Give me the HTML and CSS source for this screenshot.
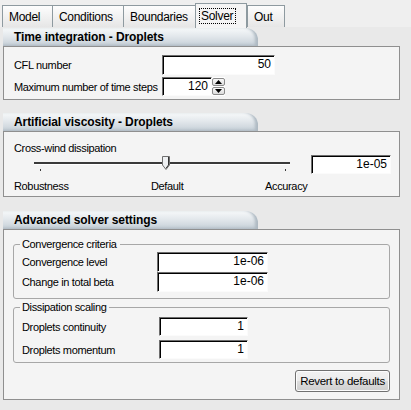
FILE: index.html
```html
<!DOCTYPE html>
<html>
<head>
<meta charset="utf-8">
<link rel="stylesheet" href="styles.css">
</head>
<body>
<div class="win">
  <div class="tabs">
    <div class="tab">Model</div>
    <div class="tab">Conditions</div>
    <div class="tab">Boundaries</div>
    <div class="tab sel"><span class="focus">Solver</span></div>
    <div class="tab">Out</div>
  </div>
  <div class="page">
    <div class="section">
      <div class="head">Time integration - Droplets</div>
      <div class="box box1">
        <div class="row r1"><span class="lbl w148">CFL number</span><div class="field f113">50</div></div>
        <div class="row r2"><span class="lbl w148">Maximum number of time steps</span>
          <div class="spin"><div class="field f50">120</div>
            <div class="btns">
              <div class="sb"><svg width="7" height="4" viewBox="0 0 7 4"><path d="M0 4 L3.5 0 L7 4Z" fill="#000"/></svg></div>
              <div class="sb"><svg width="7" height="4" viewBox="0 0 7 4"><path d="M0 0 L3.5 4 L7 0Z" fill="#000"/></svg></div>
            </div>
          </div>
        </div>
      </div>
    </div>
    <div class="section">
      <div class="head">Artificial viscosity - Droplets</div>
      <div class="box box2">
        <div class="lbl cw">Cross-wind dissipation</div>
        <div class="slrow">
          <div class="slider">
            <div class="track"></div>
            <div class="tick t0"></div>
            <div class="tick t2"></div>
            <svg class="thumb" width="8" height="15" viewBox="0 0 8 15"><path d="M0.5 0.5 H7.5 V9 L4 13.5 L0.5 9 Z" fill="#eef0f2" stroke="#6f6f6f"/><path d="M6.5 1 V9 L4 12.3" fill="none" stroke="#333"/></svg>
          </div>
          <div class="field f80">1e-05</div>
        </div>
        <div class="sllabels"><span class="lbl rob">Robustness</span><span class="lbl def">Default</span><span class="lbl acc">Accuracy</span></div>
      </div>
    </div>
    <div class="section">
      <div class="head">Advanced solver settings</div>
      <div class="box box3">
        <div class="group g1">
          <span class="gtitle">Convergence criteria</span>
          <div class="row gr1"><span class="lbl w135">Convergence level</span><div class="field f111">1e-06</div></div>
          <div class="row gr2"><span class="lbl w135">Change in total beta</span><div class="field f111">1e-06</div></div>
        </div>
        <div class="group g2">
          <span class="gtitle">Dissipation scaling</span>
          <div class="row gr3"><span class="lbl w137">Droplets continuity</span><div class="field f89">1</div></div>
          <div class="row gr4"><span class="lbl w137">Droplets momentum</span><div class="field f89">1</div></div>
        </div>
        <div class="btnrow"><div class="button">Revert to defaults</div></div>
      </div>
    </div>
  </div>
</div>
</body>
</html>
```
FILE: styles.css
```css
html, body { margin: 0; padding: 0; }
body {
  width: 411px; height: 410px; overflow: hidden;
  background: #e9e9e9;
  font-family: "Liberation Sans", Arial, sans-serif;
  font-size: 11px;
  color: #000;
}
.win { width: 411px; height: 410px; }
.tabs {
  display: flex;
  height: 27px;
  padding-left: 2px;
  align-items: flex-end;
  background: #efefef;
  box-sizing: border-box;
}
.tab {
  height: 22px;
  box-sizing: border-box;
  border: 1px solid #8e9aa0;
  border-bottom: none;
  border-right: none;
  background: linear-gradient(#fdfdfd, #e6e6e6);
  padding: 4px 5px 0 6px;
  line-height: 14px;
  font-size: 12px;
  letter-spacing: -0.3px;
  white-space: nowrap;
}
.tab:nth-child(1) { width: 50px; }
.tab:nth-child(2) { width: 71px; }
.tab:nth-child(3) { width: 72px; }
.tab.sel {
  width: 52px;
  height: 25px;
  padding: 4px 3px 0 3px;
  background: #f4f4f4;
  border-right: 1px solid #8e9aa0;
  margin-bottom: -1px;
  position: relative;
  z-index: 1;
}
.tab:nth-child(5) { width: 38px; border-right: 1px solid #8e9aa0; padding-left: 6px; }
.focus { border: 1px dotted #000; padding: 0 2px 0 1px; display: inline-block; line-height: 14px; }
.page { padding: 1px 11px 0 3px; }
.section { margin-bottom: 14px; }
.section:first-child { margin-bottom: 13px; }
.head {
  width: 255px;
  height: 18px;
  box-sizing: border-box;
  border-top-right-radius: 12px;
  background: linear-gradient(to bottom, #f7f9fa 0%, #e3e8ec 45%, #c6cfd7 100%);
  box-shadow: inset -3px -1px 3px #aeb9c2;
  font-weight: bold;
  font-size: 12px;
  letter-spacing: -0.1px;
  line-height: 18px;
  padding-left: 11px;
}
.box {
  border: 1px solid #8f8f8f;
  background: #f4f4f4;
  box-sizing: border-box;
  width: 397px;
}
.box1 { height: 54px; padding-top: 8px; }
.box2 { height: 66px; }
.box3 { height: 171px; padding: 13px 9px 0 9px; }
.row { display: flex; align-items: center; }
.lbl { white-space: nowrap; letter-spacing: -0.35px; }
.w148 { width: 148px; padding-left: 10px; flex: none; }
.r1 { height: 20px; }
.r2 { height: 19px; margin-top: 2px; }
.field {
  background: #fff;
  border: 1px solid;
  border-color: #6d6d6d #fbfbfb #fbfbfb #6d6d6d;
  box-shadow: inset 1px 1px 0 #000;
  box-sizing: border-box;
  text-align: right;
  padding: 0 3px 0 0;
  font-size: 12px;
  line-height: 17px;
  height: 20px;
  flex: none;
}
.f113 { width: 113px; }
.f50 { width: 50px; height: 19px; line-height: 17px; }
.f80 { width: 80px; height: 19px; }
.f111 { width: 111px; height: 20px; }
.f89 { width: 89px; height: 19px; }
.spin { display: flex; background: #fff; height: 19px; }
.btns { display: flex; flex-direction: column; width: 13px; padding: 1px 0 1px 0; box-sizing: border-box; gap: 1px; background: #fff; }
.sb {
  flex: 1;
  border: 1px solid #8a8a8a;
  border-radius: 2px;
  background: linear-gradient(#f8f8f8, #dcdcdc);
  display: flex; align-items: center; justify-content: center;
}
.cw { padding: 9px 0 0 10px; line-height: 14px; height: 14px; }
.slrow { display: flex; align-items: flex-start; height: 20px; margin-top: -2px; }
.slider { position: relative; width: 299px; height: 20px; flex: none; margin-left: 8px; }
.track {
  position: absolute; left: 22px; top: 9px; width: 256px; height: 2px;
  background: #3a3a3a; border-bottom: 1px solid #fff;
}
.tick { position: absolute; top: 16px; width: 1px; height: 2px; background: #3a3a3a; }
.t0 { left: 28px; }
.t2 { left: 273px; }
.thumb { position: absolute; left: 150px; top: 3px; }
.f80 { margin-top: 2px; }
.sllabels { display: flex; padding-left: 10px; margin-top: 6px; line-height: 14px; }
.rob { width: 137px; }
.def { width: 114px; }
.group {
  position: relative;
  border: 1px solid #a7a7a7;
  border-radius: 3px;
  box-sizing: border-box;
  width: 377px;
}
.g1 { height: 55px; margin-top: 1px; padding: 7px 0 0 8px; }
.g2 { height: 56px; margin-top: 8px; padding: 9px 0 0 8px; }
.gtitle {
  position: absolute; left: 6px; top: -8px;
  background: #f4f4f4; padding: 0 3px 0 2px; line-height: 14px;
  letter-spacing: -0.35px;
}
.w135 { width: 135px; flex: none; }
.w137 { width: 137px; flex: none; }
.gr1 { height: 20px; }
.gr2 { height: 20px; }
.gr4 { margin-top: 4px; }
.gr3, .gr4 { height: 19px; }
.btnrow { display: flex; justify-content: flex-end; margin-top: 7px; }
.button {
  width: 95px; height: 22px; box-sizing: border-box;
  border: 1px solid #707070; border-radius: 3px;
  background: linear-gradient(#f2f2f2 0%, #ebebeb 50%, #dddddd 51%, #cfcfcf 100%);
  box-shadow: inset 0 0 0 1px #fcfcfc;
  text-align: center; line-height: 20px; font-size: 11.5px;
  letter-spacing: -0.3px; white-space: nowrap;
}
```
